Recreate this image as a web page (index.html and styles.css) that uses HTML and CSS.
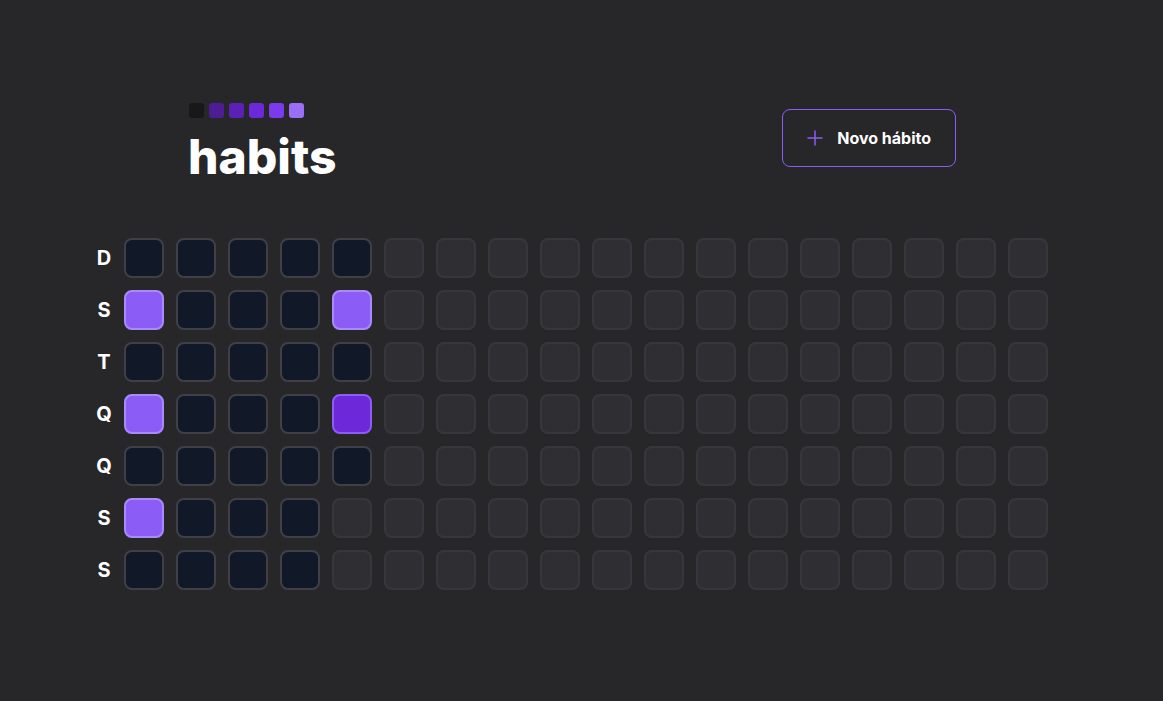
FILE: index.html
```html
<!DOCTYPE html>
<html lang="pt-BR">
<head>
<meta charset="utf-8">
<title>habits</title>
<link rel="stylesheet" href="styles.css">
</head>
<body>
<div class="page">
  <header class="header">
    <div class="brand">
      <div class="logo">
        <span class="sq sq1"></span>
        <span class="sq sq2"></span>
        <span class="sq sq3"></span>
        <span class="sq sq4"></span>
        <span class="sq sq5"></span>
        <span class="sq sq6"></span>
      </div>
      <h1 class="title">habits</h1>
    </div>
    <button class="new-btn" type="button">
      <svg class="plus" width="20" height="20" viewBox="0 0 20 20" fill="none" stroke="#8b5cf6" stroke-width="1.5" stroke-linecap="round"><path d="M3 10h14M10 3v14"/></svg>
      <span>Novo hábito</span>
    </button>
  </header>

  <main class="summary">
    <div class="days">
      <div class="day">D</div>
      <div class="day">S</div>
      <div class="day">T</div>
      <div class="day">Q</div>
      <div class="day">Q</div>
      <div class="day">S</div>
      <div class="day">S</div>
    </div>
    <div class="grid" id="grid"></div>
  </main>
</div>
<script src="app.js"></script>
</body>
</html>
```

FILE: app.js
```js
(function () {
  var grid = document.getElementById('grid');
  var special = {
    '1-0': 'done', '1-4': 'done', '3-0': 'done', '3-4': 'part', '5-0': 'done'
  };
  for (var c = 0; c < 18; c++) {
    for (var r = 0; r < 7; r++) {
      var d = document.createElement('div');
      d.className = 'cell';
      var past = (c < 4) || (c === 4 && r < 5);
      var key = r + '-' + c;
      if (special[key]) d.className += ' ' + special[key];
      else if (past) d.className += ' past';
      d.style.gridRow = String(r + 1);
      d.style.gridColumn = String(c + 1);
      grid.appendChild(d);
    }
  }
})();
```

FILE: styles.css
```css
* { box-sizing: border-box; }
html, body {
  margin: 0;
  padding: 0;
  background: #27272a;
  color: #fff;
  font-family: Inter, "Noto Sans", sans-serif;
}
.page {
  width: 1163px;
  height: 701px;
  padding-top: 103px;
}
.header {
  margin-left: 189px;
  width: 767px;
  display: flex;
  justify-content: space-between;
  align-items: center;
}
.brand {
  display: flex;
  flex-direction: column;
  gap: 15px;
}
.logo {
  display: flex;
  gap: 5px;
}
.sq {
  width: 15px;
  height: 15px;
  border-radius: 3px;
}
.sq1 { background: #18181b; }
.sq2 { background: #4c1d95; }
.sq3 { background: #5b21b6; }
.sq4 { background: #6d28d9; }
.sq5 { background: #7c3aed; }
.sq6 { background: #9b6ef6; }
.title {
  margin: 0;
  font-size: 48px;
  line-height: 48px;
  font-weight: 800;
  margin-left: -1px;
}
.new-btn {
  display: flex;
  align-items: center;
  gap: 12px;
  height: 58px;
  padding: 0 24px 0 22px;
  border: 1px solid #8b5cf6;
  border-radius: 8px;
  background: transparent;
  color: #fff;
  font-family: Inter, "Noto Sans", sans-serif;
  font-size: 16px;
  font-weight: 700;
  margin-top: -8px;
}
.summary {
  margin-top: 57px;
  margin-left: 84px;
  display: flex;
}
.days {
  display: grid;
  grid-template-rows: repeat(7, 40px);
  row-gap: 12px;
}
.day {
  width: 40px;
  height: 40px;
  display: flex;
  align-items: center;
  justify-content: center;
  font-size: 20px;
  font-weight: 700;
  color: #fff;
}
.grid {
  display: grid;
  grid-template-rows: repeat(7, 40px);
  grid-template-columns: repeat(18, 40px);
  gap: 12px;
}
.cell {
  width: 40px;
  height: 40px;
  border-radius: 8px;
  background: #2f2f33;
  border: 2px solid #37373b;
}
.cell.past {
  background: #111827;
  border-color: #3f3f46;
}
.cell.done {
  background: #8b5cf6;
  border-color: #a78bfa;
}
.cell.part {
  background: #6d28d9;
  border-color: #8b5cf6;
}
```
